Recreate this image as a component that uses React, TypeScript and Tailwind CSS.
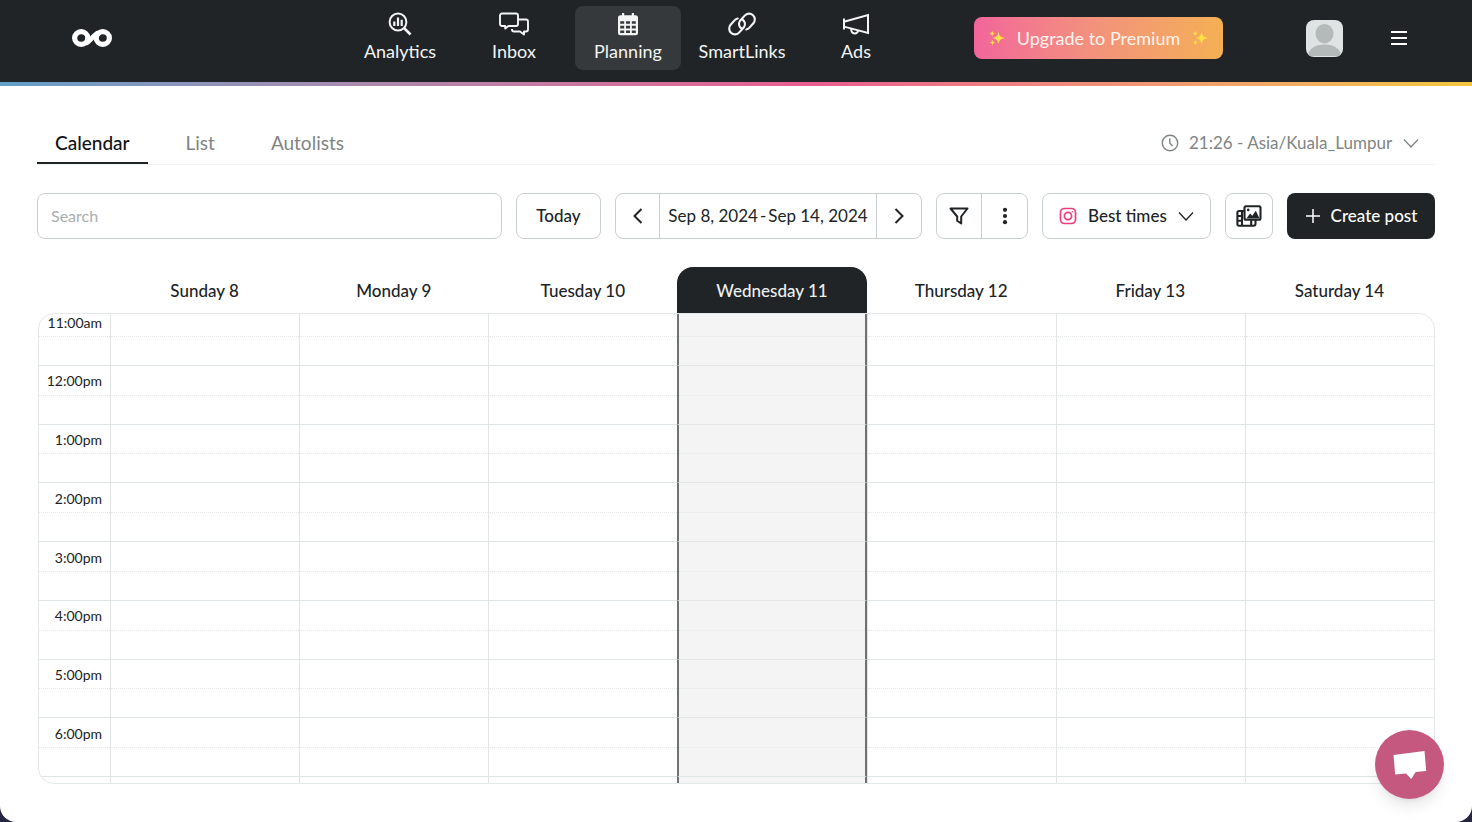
import React from "react";

type IconProps = { className?: string };

function LogoIcon({ className }: IconProps) {
  return (
    <svg viewBox="0 0 40 18" className={className} fill="none" stroke="#fff" strokeWidth="5.2" aria-hidden="true">
      <ellipse cx="9.2" cy="9" rx="6.6" ry="6.3" />
      <ellipse cx="30.8" cy="9" rx="6.6" ry="6.3" />
      <path d="M14 14.2c2.600-.6 9.400-9.800 12-10.400" strokeWidth="4.800" />
    </svg>
  );
}

function AnalyticsIcon({ className }: IconProps) {
  return (
    <svg viewBox="0 0 24 24" className={className} fill="none" stroke="currentColor" strokeWidth="2" aria-hidden="true">
      <circle cx="10" cy="10" r="8.400" />
      <path d="M16 16 22.500 22.500" strokeWidth="2.600" />
      <path d="M6.300 9.500v4.500M10 5.500v8.500M13.700 7.800v6.200" strokeWidth="2.200" />
    </svg>
  );
}

function InboxIcon({ className }: IconProps) {
  return (
    <svg viewBox="0 0 30 24" className={className} fill="none" stroke="currentColor" strokeWidth="1.9" strokeLinejoin="round" aria-hidden="true">
      <path d="M3 1.500h14a2 2 0 0 1 2 2v8.500a2 2 0 0 1-2 2H9.500l-3.300 2.600V14H3a2 2 0 0 1-2-2V3.500a2 2 0 0 1 2-2Z" />
      <path d="M19 7.500h8a2 2 0 0 1 2 2v8a2 2 0 0 1-2 2h-2v3l-4-3h-6a2 2 0 0 1-2-2V17" />
    </svg>
  );
}

function PlanningIcon({ className }: IconProps) {
  return (
    <svg viewBox="0 0 22 24" className={className} aria-hidden="true">
      <path
        fill="currentColor"
        fillRule="evenodd"
        d="M5 1h2.200v2.200h7.600V1H17v2.200h1.500a2.500 2.500 0 0 1 2.500 2.500v15a2.500 2.500 0 0 1-2.500 2.500h-15A2.500 2.500 0 0 1 1 20.700v-15a2.500 2.500 0 0 1 2.500-2.500H5ZM3.200 9.200v2.600h4V9.200Zm5.800 0v2.600h4V9.200Zm5.800 0v2.600h4V9.200ZM3.200 13.800v2.600h4v-2.600Zm5.800 0v2.600h4v-2.600Zm5.800 0v2.600h4v-2.600ZM3.200 18.400V21h4v-2.600Zm5.800 0V21h4v-2.600Zm5.800 0V21h4v-2.600Z"
      />
    </svg>
  );
}

function LinksIcon({ className }: IconProps) {
  return (
    <svg viewBox="0 0 28 24" className={className} fill="none" stroke="currentColor" strokeWidth="2.100" strokeLinecap="round" aria-hidden="true">
      <path d="M13.700 16.500A5.300 5.300 0 0 1 11.900 9l4.800-5.400a5.800 5.800 0 0 1 8.300-.4 5.800 5.800 0 0 1 .4 8l-4.200 4.700a5 5 0 0 1-2.900 1.600" />
      <path d="M14.300 7.500a5.300 5.300 0 0 1 1.800 7.500l-4.800 5.400a5.800 5.800 0 0 1-8.300.4 5.800 5.800 0 0 1-.4-8l4.200-4.700a5 5 0 0 1 2.900-1.600" />
    </svg>
  );
}

function AdsIcon({ className }: IconProps) {
  return (
    <svg viewBox="0 0 28 24" className={className} fill="none" stroke="currentColor" strokeWidth="2" aria-hidden="true">
      <path d="M2 6.500v11" />
      <path d="M2 9.800 26 3v18L2 14.600Z" />
      <path d="M9.300 17v1.400a3.500 3.500 0 0 0 6.800.6" />
    </svg>
  );
}

function SparklesIcon({ className }: IconProps) {
  return (
    <svg viewBox="0 0 16 16" className={className} fill="#fde047" aria-hidden="true">
      <path d="M9.500 2c1 4 2 5 6.300 6-4.300 1-5.300 2-6.300 6-1-4-2-5-5.700-6 3.700-1 4.700-2 5.700-6Z" />
      <path d="M3.200.8c.5 1.800 1 2.300 2.800 2.800-1.800.5-2.300 1-2.800 2.800C2.700 4.600 2.200 4.100.4 3.600 2.200 3.100 2.700 2.600 3.200.8ZM3.400 9.900c.5 1.700 1 2.200 2.700 2.700-1.700.5-2.200 1-2.700 2.700-.5-1.700-1-2.200-2.700-2.700 1.700-.5 2.200-1 2.700-2.700Z" />
    </svg>
  );
}

function AvatarIcon({ className }: IconProps) {
  return (
    <svg viewBox="0 0 37 37" className={className} aria-hidden="true">
      <rect width="37" height="37" fill="#dfe3e4" />
      <ellipse cx="18.500" cy="13.700" rx="9" ry="9.700" fill="#b4b9ba" />
      <path d="M2 36c0-7 7-11.500 16.500-11.500S35 29 35 36Z" fill="#b4b9ba" />
    </svg>
  );
}

function MenuIcon({ className }: IconProps) {
  return (
    <svg viewBox="0 0 16 16" className={className} stroke="#fff" strokeWidth="1.800" aria-hidden="true">
      <path d="M0 2h16M0 8h16M0 14h16" />
    </svg>
  );
}

function ClockIcon({ className }: IconProps) {
  return (
    <svg viewBox="0 0 18 18" className={className} fill="none" stroke="currentColor" strokeWidth="1.400" aria-hidden="true">
      <circle cx="9" cy="9" r="7.700" />
      <path d="M8.800 4.500V9.200l2.900 2.900" />
    </svg>
  );
}

function ChevronDown({ className }: IconProps) {
  return (
    <svg viewBox="0 0 16 16" className={className} fill="none" stroke="currentColor" strokeWidth="1.300" aria-hidden="true">
      <path d="m1 4.500 7 7.500 7-7.500" />
    </svg>
  );
}

function ArrowIcon({ className }: IconProps) {
  return (
    <svg viewBox="0 0 16 16" className={className} fill="none" stroke="currentColor" strokeWidth="2" aria-hidden="true">
      <path d="M11.500 1 4.500 8l7 7" />
    </svg>
  );
}

function FunnelIcon({ className }: IconProps) {
  return (
    <svg viewBox="0 0 20 18" className={className} fill="none" stroke="currentColor" strokeWidth="2" strokeLinejoin="round" aria-hidden="true">
      <path d="M1.500 1.500h17l-6.300 8v7l-4-2.800V9.500Z" />
    </svg>
  );
}

function DotsIcon({ className }: IconProps) {
  return (
    <svg viewBox="0 0 6 18" className={className} fill="currentColor" aria-hidden="true">
      <circle cx="3" cy="2.800" r="2.100" />
      <circle cx="3" cy="9" r="2.100" />
      <circle cx="3" cy="15.200" r="2.100" />
    </svg>
  );
}

function InstagramIcon({ className }: IconProps) {
  return (
    <svg viewBox="0 0 18 18" className={className} fill="none" stroke="#ec3f7c" strokeWidth="1.700" aria-hidden="true">
      <rect x="1.500" y="1.500" width="15" height="15" rx="4" />
      <circle cx="9" cy="9" r="3.600" />
      <circle cx="13.300" cy="4.800" r="0.800" fill="#ec3f7c" stroke="none" />
    </svg>
  );
}

function MediaIcon({ className }: IconProps) {
  return (
    <svg viewBox="0 0 26 22" className={className} fill="none" stroke="currentColor" strokeWidth="2.100" aria-hidden="true">
      <rect x="8.500" y="1.200" width="16" height="13.600" rx="1.500" />
      <path d="m10.500 13.500 3.600-5 2.200 2.300 3.500-5 3.700 7.700Z" fill="currentColor" stroke="none" />
      <circle cx="12.200" cy="4.900" r="1.300" fill="currentColor" stroke="none" />
      <path d="M8 6H3a1.600 1.600 0 0 0-1.600 1.600v11.600A1.600 1.600 0 0 0 3 20.800h14.500a2 2 0 0 0 2-2V15M6 6v14.800M1.400 11H6M1.400 15.800H6M15.200 15v5.800" />
    </svg>
  );
}

function PlusIcon({ className }: IconProps) {
  return (
    <svg viewBox="0 0 16 16" className={className} stroke="currentColor" strokeWidth="1.500" aria-hidden="true">
      <path d="M8 1v14M1 8h14" />
    </svg>
  );
}

function ChatIcon({ className }: IconProps) {
  return (
    <svg viewBox="0 0 34 30" className={className} fill="#fff" aria-hidden="true">
      <path d="M.5 5 31.500 1l1.700 20-10.500 1-4.500 7-5.200-5.500L2.200 24.500Z" />
    </svg>
  );
}

const navItems = [
  { label: "Analytics", Icon: AnalyticsIcon, active: false },
  { label: "Inbox", Icon: InboxIcon, active: false },
  { label: "Planning", Icon: PlanningIcon, active: true },
  { label: "SmartLinks", Icon: LinksIcon, active: false },
  { label: "Ads", Icon: AdsIcon, active: false },
];

const tabs = ["Calendar", "List", "Autolists"];

const days = [
  "Sunday 8",
  "Monday 9",
  "Tuesday 10",
  "Wednesday 11",
  "Thursday 12",
  "Friday 13",
  "Saturday 14",
];
const today = "Wednesday 11";

const hours = ["11:00am", "12:00pm", "1:00pm", "2:00pm", "3:00pm", "4:00pm", "5:00pm", "6:00pm"];

function Header() {
  return (
    <header>
      <div className="flex h-[82px] items-center bg-[#202426] pr-[65px] text-[#f3f5f5]">
        <div className="flex flex-1 pb-1.5 pl-[72px]">
          <a href="#home" aria-label="Home">
            <LogoIcon className="h-[18px] w-10" />
          </a>
        </div>
        <nav className="flex h-full gap-2 pt-1.5 pb-3">
          {navItems.map(({ label, Icon, active }) => (
            <a
              key={label}
              href={"#" + label.toLowerCase()}
              aria-current={active ? "page" : undefined}
              className={
                "flex w-[106px] flex-col items-center gap-[3px] rounded-lg pt-1.5 text-lg leading-6 " +
                (active ? "bg-[#35393b]" : "")
              }
            >
              <Icon className="h-6 w-[30px]" />
              {label}
            </a>
          ))}
        </nav>
        <button
          type="button"
          className="mb-1.5 ml-[65px] flex h-[42px] w-[249px] items-center justify-center gap-3 rounded-lg bg-linear-to-r from-[#f2659a] via-[#f2937a] to-[#f4b053] text-lg text-[#fff3ec]"
        >
          <SparklesIcon className="size-4" />
          Upgrade to Premium
          <SparklesIcon className="size-4" />
        </button>
        <button type="button" aria-label="Account" className="mb-1.5 ml-[83px] overflow-hidden rounded-lg">
          <AvatarIcon className="size-[37px]" />
        </button>
        <button type="button" aria-label="Menu" className="mb-1.5 ml-12">
          <MenuIcon className="size-4" />
        </button>
      </div>
      <div className="h-1 bg-linear-to-r from-[#5f9fc8] via-[#e85d8f] via-55% to-[#f3c63c]" />
    </header>
  );
}

function Tabs() {
  return (
    <div className="flex items-end justify-between border-b border-[#f1f3f3]">
      <div role="tablist" className="flex gap-5">
        {tabs.map((tab, i) => (
          <button
            key={tab}
            type="button"
            role="tab"
            aria-selected={i === 0}
            className={
              "h-11 border-b-2 px-[18px] pt-1 text-[19px] " +
              (i === 0 ? "border-[#202426] font-medium text-[#101214]" : "border-transparent text-[#7f8486]")
            }
          >
            {tab}
          </button>
        ))}
      </div>
      <label className="flex h-11 items-center gap-2.5 pt-0.5 pr-4 text-[#7f8486]">
        <ClockIcon className="size-[18px]" />
        <select aria-label="Time zone" className="appearance-none bg-transparent text-[17px]">
          <option>21:26 - Asia/Kuala_Lumpur</option>
        </select>
        <ChevronDown className="size-4" />
      </label>
    </div>
  );
}

function Toolbar() {
  return (
    <div className="mt-7 flex h-[46px] gap-3.5 text-[17px] text-[#202426]">
      <input
        type="search"
        aria-label="Search"
        placeholder="Search"
        className="min-w-0 flex-1 rounded-lg border border-[#c9cfcf] px-[13px] text-base placeholder:text-[#a9aeae]"
      />
      <button type="button" className="w-[85px] rounded-lg border border-[#c9cfcf] font-medium">
        Today
      </button>
      <div className="flex divide-x divide-[#c9cfcf] rounded-lg border border-[#c9cfcf]">
        <button type="button" aria-label="Previous week" className="flex w-11 items-center justify-center">
          <ArrowIcon className="size-4" />
        </button>
        <button type="button" className="flex w-[217px] items-center justify-center gap-0.5 whitespace-nowrap">
          <span>Sep 8, 2024</span>
          <span>-</span>
          <span>Sep 14, 2024</span>
        </button>
        <button type="button" aria-label="Next week" className="flex w-11 items-center justify-center">
          <ArrowIcon className="size-4 rotate-180" />
        </button>
      </div>
      <div className="flex divide-x divide-[#c9cfcf] rounded-lg border border-[#c9cfcf]">
        <button type="button" aria-label="Filter" className="flex w-[45px] items-center justify-center">
          <FunnelIcon className="h-[18px] w-5" />
        </button>
        <button type="button" aria-label="More options" className="flex w-[45px] items-center justify-center">
          <DotsIcon className="h-[18px] w-1.5" />
        </button>
      </div>
      <label className="flex w-[169px] items-center justify-between rounded-lg border border-[#c9cfcf] px-4">
        <InstagramIcon className="size-[18px]" />
        <select aria-label="Best times" className="appearance-none bg-transparent font-medium">
          <option>Best times</option>
        </select>
        <ChevronDown className="size-4" />
      </label>
      <button
        type="button"
        aria-label="Media library"
        className="flex w-12 items-center justify-center rounded-lg border border-[#c9cfcf]"
      >
        <MediaIcon className="h-[22px] w-[26px]" />
      </button>
      <button
        type="button"
        className="flex w-[148px] items-center justify-center gap-2.5 rounded-lg bg-[#202426] font-medium text-white"
      >
        <PlusIcon className="size-4" />
        Create post
      </button>
    </div>
  );
}

function Calendar() {
  return (
    <table className="mt-7 ml-px flex flex-1 flex-col text-[#202426]">
      <thead className="block">
        <tr className="grid grid-cols-[72px_repeat(7,minmax(0,1fr))] pr-px">
          <td />
          {days.map((day) => (
            <th
              key={day}
              scope="col"
              className={
                "flex h-[46px] items-center justify-center pt-0.5 text-[17px] font-medium " +
                (day === today ? "rounded-t-2xl bg-[#202426] text-[#eef0f0]" : "")
              }
            >
              {day}
            </th>
          ))}
        </tr>
      </thead>
      <tbody className="flex flex-1 flex-col overflow-hidden rounded-2xl border border-[#e4e8e8]">
        {hours.map((hour, row) => (
          <tr
            key={hour}
            className={
              "grid grid-cols-[71px_repeat(7,minmax(0,1fr))] " + (row === 0 ? "h-[52px]" : "min-h-[52px] flex-1")
            }
          >
            <th
              scope="row"
              className="flex flex-col justify-end border-b border-[#dfe4e4] text-right text-sm font-normal"
            >
              <div
                className={
                  "flex flex-1 justify-end pr-2 " + (row === 0 ? "items-start leading-[18px]" : "items-center pt-0.5 leading-5")
                }
              >
                {hour}
              </div>
              <div className="h-[29px] border-t border-dotted border-[#e3e7e7]" />
            </th>
            {days.map((day) => (
              <td
                key={day}
                className={
                  "flex flex-col justify-end border-b " +
                  (day === today
                    ? "border-x-2 border-x-[#6e7274] border-b-[#e2e5e5] bg-[#f4f4f4]"
                    : "border-l border-b-[#dfe4e4] border-l-[#e1e5e5]")
                }
              >
                <div className="h-[29px] border-t border-dotted border-[#e3e7e7]" />
              </td>
            ))}
          </tr>
        ))}
        <tr className="grid h-1.5 grid-cols-[71px_repeat(7,minmax(0,1fr))]">
          <td />
          {days.map((day) => (
            <td
              key={day}
              className={day === today ? "border-x-2 border-[#6e7274] bg-[#f4f4f4]" : "border-l border-[#e1e5e5]"}
            />
          ))}
        </tr>
      </tbody>
    </table>
  );
}

export default function App() {
  return (
    <div className="min-h-screen bg-[#25263f] font-[Lato,sans-serif]">
      <div className="flex min-h-screen flex-col rounded-b-2xl bg-white">
        <Header />
        <main className="flex flex-1 flex-col px-[37px] pt-[34px] pb-[38px]">
          <Tabs />
          <Toolbar />
          <Calendar />
        </main>
      </div>
      <button
        type="button"
        aria-label="Open chat"
        className="fixed right-7 bottom-[23px] flex size-[69px] items-center justify-center rounded-full bg-[#c5587f] shadow-lg"
      >
        <ChatIcon className="h-[30px] w-[34px]" />
      </button>
    </div>
  );
}
